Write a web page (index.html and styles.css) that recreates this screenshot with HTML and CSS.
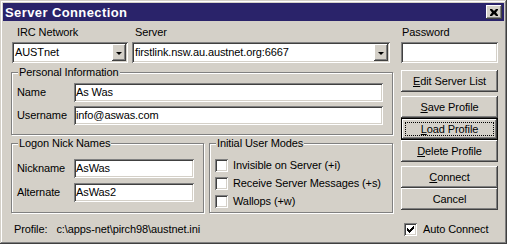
FILE: index.html
```html
<!DOCTYPE html>
<html lang="en">
  <head>
    <meta charset="UTF-8" />
    <meta name="viewport" content="width=device-width, initial-scale=1.0" />
    <title>Server Connection</title>
    <link rel="stylesheet" href="styles.css">
  </head>
  <body>
    <div class="window">
      <div class="titlebar">
        <span class="title">Server Connection</span>
        <button class="close" type="button">
          <svg width="8" height="7" viewBox="0 0 8 7">
            <path d="M0 0h2l2 2 2-2h2v1L6 3.5 8 6v1H6L4 5 2 7H0V6l2-2.5L0 1z" fill="#000" />
          </svg>
        </button>
      </div>
      <div class="dialog">
        <div class="main">
          <div class="top-row">
            <div class="field net">
              <label>IRC Network</label>
              <div class="combo">
                <span class="combo-text">AUSTnet</span>
                <span class="drop"><i></i></span>
              </div>
            </div>
            <div class="field server">
              <label>Server</label>
              <div class="combo">
                <span class="combo-text">firstlink.nsw.au.austnet.org:6667</span>
                <span class="drop"><i></i></span>
              </div>
            </div>
          </div>

          <div class="group personal">
            <span class="legend">Personal Information</span>
            <div class="row">
              <label>Name</label>
              <div class="edit wide">As Was</div>
            </div>
            <div class="row">
              <label>Username</label>
              <div class="edit wide">info@aswas.com</div>
            </div>
          </div>

          <div class="split">
            <div class="group nicks">
              <span class="legend">Logon Nick Names</span>
              <div class="row">
                <label>Nickname</label>
                <div class="edit short">AsWas</div>
              </div>
              <div class="row">
                <label>Alternate</label>
                <div class="edit short">AsWas2</div>
              </div>
            </div>
            <div class="group modes">
              <span class="legend">Initial User Modes</span>
              <div class="check"><span class="box"></span>Invisible on Server (+i)</div>
              <div class="check"><span class="box"></span>Receive Server Messages (+s)</div>
              <div class="check"><span class="box"></span>Wallops (+w)</div>
            </div>
          </div>

          <div class="profile">
            <span class="profile-label">Profile:</span>
            <span>c:\apps-net\pirch98\austnet.ini</span>
          </div>
        </div>

        <div class="side">
          <label class="pw-label">Password</label>
          <div class="edit password"></div>
          <button class="btn first" type="button"><u>E</u>dit Server List</button>
          <button class="btn gap" type="button"><u>S</u>ave Profile</button>
          <button class="btn focused" type="button"><span class="focus"><u>L</u>oad Profile</span></button>
          <button class="btn" type="button"><u>D</u>elete Profile</button>
          <button class="btn gap" type="button"><u>C</u>onnect</button>
          <button class="btn" type="button">Cancel</button>
          <div class="check auto">
            <span class="box">
              <svg width="7" height="7" viewBox="0 0 7 7">
                <path d="M0 2h1v1h1v1h1V3h1V2h1V1h1V0h1v3H6v1H5v1H4v1H3v1H2V6H1V5H0z" fill="#000" />
              </svg>
            </span>Auto Connect
          </div>
        </div>
      </div>
    </div>
  </body>
</html>
```

FILE: styles.css
```css
html,
body {
  margin: 0;
  padding: 0;
  width: 507px;
  height: 244px;
  overflow: hidden;
  background: #d4d0c8;
}
body {
  font-family: "Liberation Sans", Arial, sans-serif;
  font-size: 11px;
  line-height: 13px;
  letter-spacing: -0.1px;
  color: #000;
}
.window {
  box-sizing: border-box;
  width: 507px;
  height: 244px;
  padding: 3px;
  background: #d4d0c8;
  box-shadow: inset -1px -1px #404040, inset 1px 1px #d4d0c8,
    inset -2px -2px #808080, inset 2px 2px #fff;
}
.titlebar {
  height: 18px;
  background: #2a236a;
  color: #fff;
  display: flex;
  align-items: center;
  justify-content: space-between;
  padding: 0 2px;
}
.title {
  font-weight: bold;
  font-size: 13px;
  letter-spacing: 0.4px;
  padding-top: 1px;
}
.close {
  box-sizing: border-box;
  width: 16px;
  height: 14px;
  padding: 0;
  border: none;
  background: #d4d0c8;
  display: flex;
  align-items: center;
  justify-content: center;
  box-shadow: inset -1px -1px #404040, inset 1px 1px #fff,
    inset -2px -2px #808080, inset 2px 2px #d4d0c8;
}
.dialog {
  display: flex;
  gap: 8px;
  padding: 5px 0 0 8px;
}
.main {
  width: 382px;
}
.side {
  width: 97px;
  display: flex;
  flex-direction: column;
}

/* sunken fields */
.combo,
.edit {
  box-sizing: border-box;
  background: #fff;
  box-shadow: inset 1px 1px #808080, inset -1px -1px #fff,
    inset 2px 2px #404040, inset -2px -2px #d4d0c8;
}

.top-row {
  display: flex;
  gap: 4px;
  padding-left: 1px;
}
.field label {
  display: block;
  height: 13px;
  margin-bottom: 3px;
}
.net label {
  padding-left: 5px;
}
.server label {
  padding-left: 3px;
}
.combo {
  height: 21px;
  display: flex;
  align-items: center;
  padding: 2px;
}
.net .combo {
  width: 116px;
}
.server .combo {
  width: 258px;
}
.combo-text {
  flex: 1;
  padding-left: 1px;
  white-space: nowrap;
  overflow: hidden;
}
.drop {
  box-sizing: border-box;
  width: 14px;
  height: 17px;
  background: #d4d0c8;
  display: flex;
  align-items: center;
  justify-content: center;
  box-shadow: inset -1px -1px #404040, inset 1px 1px #fff,
    inset -2px -2px #808080;
}
.drop i {
  width: 0;
  height: 0;
  border-left: 3px solid transparent;
  border-right: 3px solid transparent;
  border-top: 3px solid #000;
  margin-top: 1px;
}

/* etched group boxes */
.group {
  position: relative;
  box-sizing: border-box;
  border: 1px solid #808080;
  box-shadow: inset 1px 1px #fff, 1px 1px #fff;
}
.legend {
  position: absolute;
  top: -7px;
  left: 6px;
  padding: 0 1px;
  background: #d4d0c8;
}
.personal {
  margin-top: 9px;
  height: 63px;
  padding: 10px 0 0 5px;
}
.row {
  display: flex;
  align-items: center;
  margin-bottom: 4px;
}
.row label {
  width: 57px;
}
.edit {
  height: 19px;
  padding: 3px 2px 0 2px;
  white-space: nowrap;
}
.edit.wide {
  width: 309px;
}
.edit.short {
  width: 120px;
}

.split {
  display: flex;
  gap: 5px;
  margin-top: 8px;
}
.nicks {
  width: 193px;
  height: 70px;
  padding: 15px 0 0 5px;
}
.nicks .row {
  margin-bottom: 5px;
}
.modes {
  width: 184px;
  height: 70px;
  padding: 12px 0 0 5px;
}
.check {
  display: flex;
  align-items: center;
  height: 18px;
  white-space: nowrap;
}
.box {
  box-sizing: border-box;
  width: 13px;
  height: 13px;
  margin-right: 5px;
  background: #fff;
  display: flex;
  align-items: center;
  justify-content: center;
  box-shadow: inset 1px 1px #808080, inset -1px -1px #fff,
    inset 2px 2px #404040, inset -2px -2px #d4d0c8;
}
.profile {
  margin-top: 10px;
  padding-left: 3px;
}
.profile-label {
  margin-right: 6px;
}

/* right column */
.pw-label {
  height: 13px;
  margin-bottom: 3px;
  padding-left: 1px;
}
.edit.password {
  width: 97px;
  height: 21px;
}
.btn {
  box-sizing: border-box;
  width: 97px;
  height: 22px;
  padding: 0;
  border: none;
  background: #d4d0c8;
  font-family: inherit;
  font-size: 11px;
  letter-spacing: -0.1px;
  color: #000;
  box-shadow: inset -1px -1px #404040, inset 1px 1px #fff,
    inset -2px -2px #808080, inset 2px 2px #d4d0c8;
}
.btn.first {
  margin-top: 7px;
}
.btn.gap {
  margin-top: 4px;
}
.btn.focused {
  border: 1px solid #000;
  box-shadow: inset -1px -1px #404040, inset 1px 1px #fff,
    inset -2px -2px #808080;
  padding: 3px;
}
.focus {
  display: block;
  height: 100%;
  box-sizing: border-box;
  border: 1px dotted #000;
  line-height: 12px;
}
.check.auto {
  margin-top: 10px;
  padding-left: 3px;
}
.auto .box {
  margin-right: 6px;
}
```
